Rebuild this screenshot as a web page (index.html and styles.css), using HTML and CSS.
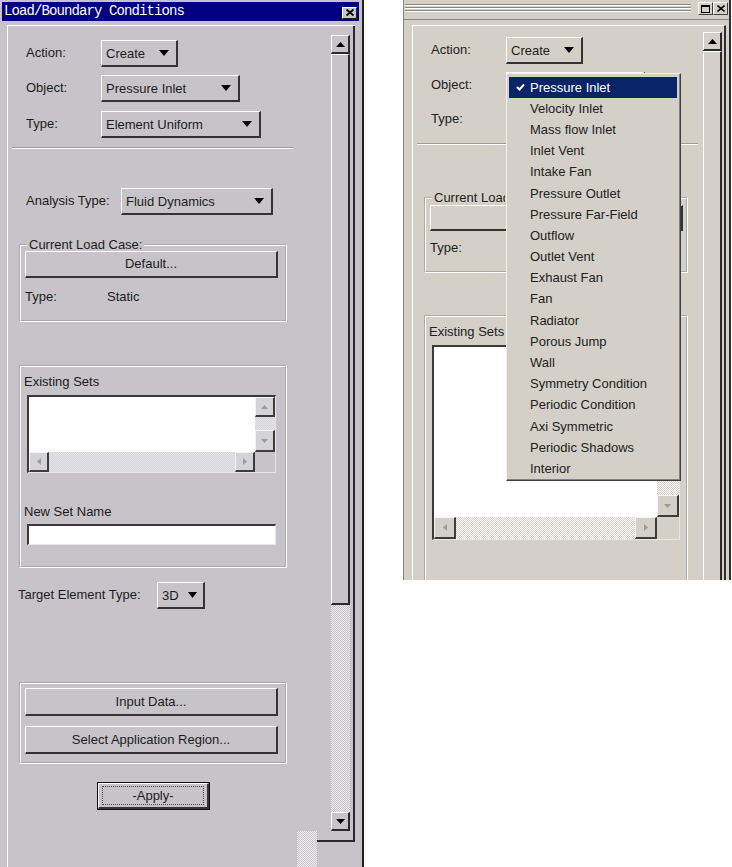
FILE: index.html
```html
<!DOCTYPE html>
<html lang="en">
<head>
<meta charset="utf-8">
<title>Load/Boundary Conditions</title>
<link rel="stylesheet" href="styles.css">
</head>
<body>
<div class="desk">

  <!-- Motif-style form -->
  <section class="lwin">
    <header class="ltitle">
      <span class="ltitle-text">Load/Boundary Conditions</span>
      <span class="tclose"><svg width="8" height="7" viewBox="0 0 8 7"><path d="M0.5 0.5L7.5 6.5M7.5 0.5L0.5 6.5" stroke="#000" stroke-width="1.8"/></svg></span>
    </header>
    <div class="lframe">
      <div class="lmain">
        <div class="form lform">
          <div class="row r-action"><span class="lbl lbl-std">Action:</span><div class="opt opt-create"><span>Create</span><svg width="10" height="6" viewBox="0 0 10 6"><path d="M0 0H10L5 6Z"/></svg></div></div>
          <div class="row r-object"><span class="lbl lbl-std">Object:</span><div class="opt opt-object"><span>Pressure Inlet</span><svg width="10" height="6" viewBox="0 0 10 6"><path d="M0 0H10L5 6Z"/></svg></div></div>
          <div class="row r-type"><span class="lbl lbl-std">Type:</span><div class="opt opt-type"><span>Element Uniform</span><svg width="10" height="6" viewBox="0 0 10 6"><path d="M0 0H10L5 6Z"/></svg></div></div>
          <div class="sep"></div>
          <div class="row r-analysis"><span class="lbl lbl-analysis">Analysis Type:</span><div class="opt opt-analysis"><span>Fluid Dynamics</span><svg width="10" height="6" viewBox="0 0 10 6"><path d="M0 0H10L5 6Z"/></svg></div></div>

          <fieldset class="grp grp-case">
            <legend>Current Load Case:</legend>
            <div class="pbtn">Default...</div>
            <div class="kv"><span class="kv-k">Type:</span><span>Static</span></div>
          </fieldset>

          <fieldset class="grp grp-sets">
            <div class="cap">Existing Sets</div>
            <div class="lst lst-short">
              <div class="lst-body"></div>
              <div class="lst-v">
                <div class="mbtn mbtn-up"><svg width="7" height="4" viewBox="0 0 7 4"><path d="M3.5 0L7 4H0Z"/></svg></div>
                <div class="mtrough"></div>
                <div class="mbtn mbtn-down"><svg width="7" height="4" viewBox="0 0 7 4"><path d="M0 0H7L3.5 4Z"/></svg></div>
              </div>
              <div class="lst-h">
                <div class="mbtn"><svg width="4" height="7" viewBox="0 0 4 7"><path d="M4 0V7L0 3.5Z"/></svg></div>
                <div class="mtrough"></div>
                <div class="mbtn"><svg width="4" height="7" viewBox="0 0 4 7"><path d="M0 0L4 3.5L0 7Z"/></svg></div>
              </div>
              <div class="lst-corner"></div>
            </div>
            <div class="cap cap-name">New Set Name</div>
            <div class="txt"></div>
          </fieldset>

          <div class="row r-target"><span class="lbl lbl-target">Target Element Type:</span><div class="opt opt-3d"><span>3D</span><svg width="9" height="6" viewBox="0 0 9 6"><path d="M0 0H9L4.5 6Z"/></svg></div></div>

          <fieldset class="grp grp-act">
            <div class="pbtn pbtn-tall">Input Data...</div>
            <div class="pbtn pbtn-tall pbtn-next">Select Application Region...</div>
          </fieldset>

          <div class="apply"><div class="apply-in"><span class="focus">-Apply-</span></div></div>
        </div>

        <div class="vsb lvsb">
          <div class="sbtn"><svg width="9" height="5" viewBox="0 0 9 5"><path d="M4.5 0L9 5H0Z"/></svg></div>
          <div class="thumb lthumb"></div>
          <div class="trough"></div>
          <div class="sbtn"><svg width="9" height="5" viewBox="0 0 9 5"><path d="M0 0H9L4.5 5Z"/></svg></div>
        </div>
      </div>
      <div class="lfoot">
        <div class="hstub"></div>
        <div class="corner"></div>
      </div>
    </div>
  </section>

  <!-- Windows-style form with the object menu open -->
  <section class="rwin">
    <header class="rtitle">
      <div class="grip"></div>
      <div class="tbtns">
        <span class="tbtn"><svg width="9" height="8" viewBox="0 0 9 8"><rect x="0.5" y="0.5" width="8" height="7" fill="none" stroke="#000"/><rect x="0" y="0" width="9" height="2"/></svg></span>
        <span class="tbtn"><svg width="8" height="7" viewBox="0 0 8 7"><path d="M0.5 0.5L7.5 6.5M7.5 0.5L0.5 6.5" stroke="#000" stroke-width="1.6"/></svg></span>
      </div>
    </header>
    <div class="rframe">
      <div class="form rform">
        <div class="row r-action"><span class="lbl lbl-std">Action:</span><div class="opt opt-create"><span>Create</span><svg width="10" height="6" viewBox="0 0 10 6"><path d="M0 0H10L5 6Z"/></svg></div></div>
        <!-- the Object and Type option buttons sit under the open menu -->
        <div class="row r-object"><span class="lbl lbl-std">Object:</span><div class="opt opt-object"></div></div>
        <div class="row r-type"><span class="lbl lbl-std">Type:</span><div class="opt opt-type"></div></div>
        <div class="sep"></div>

        <fieldset class="grp grp-case">
          <legend>Current Load Case:</legend>
          <div class="pbtn"></div>
          <div class="kv"><span class="kv-k">Type:</span></div>
        </fieldset>

        <fieldset class="grp grp-sets">
          <div class="cap">Existing Sets</div>
          <div class="lst lst-tall">
            <div class="lst-body"></div>
            <div class="lst-v">
              <div class="mbtn mbtn-up"><svg width="7" height="4" viewBox="0 0 7 4"><path d="M3.5 0L7 4H0Z"/></svg></div>
              <div class="mtrough"></div>
              <div class="mbtn mbtn-down"><svg width="7" height="4" viewBox="0 0 7 4"><path d="M0 0H7L3.5 4Z"/></svg></div>
            </div>
            <div class="lst-h">
              <div class="mbtn"><svg width="4" height="7" viewBox="0 0 4 7"><path d="M4 0V7L0 3.5Z"/></svg></div>
              <div class="mtrough"></div>
              <div class="mbtn"><svg width="4" height="7" viewBox="0 0 4 7"><path d="M0 0L4 3.5L0 7Z"/></svg></div>
            </div>
            <div class="lst-corner"></div>
          </div>
        </fieldset>
      </div>

      <div class="vsb rvsb">
        <div class="sbtn"><svg width="9" height="5" viewBox="0 0 9 5"><path d="M4.5 0L9 5H0Z"/></svg></div>
        <div class="thumb rthumb"></div>
      </div>
    </div>

    <ul class="menu">
      <li class="sel"><svg class="chk" width="9" height="8" viewBox="0 0 9 8"><path d="M1 4L3.5 6.5L8 1.5" fill="none" stroke="#fff" stroke-width="2"/></svg>Pressure Inlet</li>
      <li>Velocity Inlet</li>
      <li>Mass flow Inlet</li>
      <li>Inlet Vent</li>
      <li>Intake Fan</li>
      <li>Pressure Outlet</li>
      <li>Pressure Far-Field</li>
      <li>Outflow</li>
      <li>Outlet Vent</li>
      <li>Exhaust Fan</li>
      <li>Fan</li>
      <li>Radiator</li>
      <li>Porous Jump</li>
      <li>Wall</li>
      <li>Symmetry Condition</li>
      <li>Periodic Condition</li>
      <li>Axi Symmetric</li>
      <li>Periodic Shadows</li>
      <li>Interior</li>
    </ul>
  </section>

</div>
</body>
</html>
```

FILE: styles.css
```css
* { box-sizing: border-box; }

body {
  margin: 0;
  background: #fff;
  font-family: "Liberation Sans", Arial, sans-serif;
  font-size: 13px;
  color: #1c1c1c;
}

.desk {
  display: flex;
  align-items: flex-start;
}

/* ---------- left window ---------- */
.lwin {
  width: 364px;
  height: 867px;
  background: #c6c4c9;
  border-right: 2px solid #222;
  padding-top: 2px;
  display: flex;
  flex-direction: column;
}

.ltitle {
  height: 19px;
  margin: 0 3px 0 2px;
  background: #000080;
  color: #fff;
  display: flex;
  align-items: center;
  justify-content: space-between;
  padding: 0 2px;
}

.ltitle-text {
  font-family: "Liberation Mono", "Courier New", monospace;
  font-size: 14px;
  letter-spacing: -0.9px;
  line-height: 19px;
}

.tclose {
  width: 15px;
  height: 12px;
  margin-top: 2px;
  background: #c6c4c9;
  border-top: 1px solid #fff;
  border-left: 1px solid #fff;
  border-right: 1px solid #222;
  border-bottom: 1px solid #222;
  display: flex;
  align-items: center;
  justify-content: center;
}

.lframe {
  margin: 4px 0 0 7px;
  width: 348px;
  flex: 1;
  border-top: 1px solid #fff;
  border-left: 1px solid #fff;
  display: flex;
  flex-direction: column;
}

.lmain {
  height: 805px;
  display: flex;
  border-right: 2px solid #2a2a2a;
}

.lfoot {
  flex: 1;
  display: flex;
  justify-content: flex-end;
  align-items: flex-start;
}

.hstub {
  width: 20px;
  height: 36px;
  background: repeating-conic-gradient(#efeef0 0 25%, #c6c4c9 0 50%) 0 0 / 2px 2px;
}

.corner {
  width: 38px;
  height: 11px;
  border-right: 2px solid #2a2a2a;
  border-bottom: 2px solid #2a2a2a;
}

/* ---------- shared form pieces ---------- */
.form {
  flex: 1;
  min-width: 0;
  display: flex;
  flex-direction: column;
  align-items: flex-start;
}

.row {
  display: flex;
  align-items: center;
}

.lbl {
  padding-bottom: 2px;
  white-space: nowrap;
}

.lbl-std { margin-left: 18px; width: 75px; }
.lbl-analysis { margin-left: 18px; width: 95px; }
.lbl-target { margin-left: 10px; width: 139px; }

.opt {
  height: 27px;
  display: flex;
  align-items: center;
  justify-content: space-between;
  padding: 0 7px 0 4px;
  border-top: 1px solid #fff;
  border-left: 1px solid #fff;
  border-right: 2px solid #333;
  border-bottom: 2px solid #333;
  white-space: nowrap;
}

.opt svg { fill: #000; flex: none; }

.opt-create { width: 77px; }
.opt-object { width: 139px; }
.opt-type { width: 160px; }
.opt-analysis { width: 152px; }
.opt-3d { width: 48px; padding-right: 6px; }

.sep {
  margin-left: 4px;
  width: 281px;
  height: 2px;
  border-top: 1px solid #9c9a9e;
  border-bottom: 1px solid #fff;
}

.grp {
  margin: 0 0 0 11px;
  padding: 0 0 0 4px;
  border: 2px groove #fff;
  min-width: 0;
  display: block;
}

.grp legend {
  padding: 0 2px;
  margin-left: 2px;
  line-height: 12px;
}

.pbtn {
  width: 253px;
  height: 27px;
  display: flex;
  align-items: center;
  justify-content: center;
  border-top: 1px solid #fff;
  border-left: 1px solid #fff;
  border-right: 2px solid #333;
  border-bottom: 2px solid #333;
  padding-bottom: 1px;
}

.pbtn-tall { height: 28px; }
.pbtn-next { margin-top: 10px; }

.kv {
  display: flex;
  line-height: 16px;
  height: 16px;
  margin-top: 11px;
}

.kv-k { width: 82px; }

.cap { line-height: 16px; }
.cap-name { margin-top: 31px; }

.lst {
  margin-left: 3px;
  display: grid;
  background: #fff;
  border-top: 2px solid #3a3a3a;
  border-left: 2px solid #3a3a3a;
  border-right: 1px solid #e6e6e6;
  border-bottom: 1px solid #e6e6e6;
}

.lst-short {
  width: 249px;
  height: 78px;
  margin-top: 5px;
  grid-template-columns: 1fr 20px;
  grid-template-rows: 1fr 20px;
}

.lst-tall {
  width: 248px;
  height: 195px;
  margin-top: 5px;
  grid-template-columns: 1fr 22px;
  grid-template-rows: 1fr 22px;
}

.lst-body { background: #fff; }

.lst-v {
  display: flex;
  flex-direction: column;
}

.lst-h {
  display: flex;
}

.lst-corner { background: #c6c4c9; }

.mbtn {
  flex: none;
  width: 20px;
  height: 20px;
  display: flex;
  align-items: center;
  justify-content: center;
  background: #d4d4d6;
  border-top: 1px solid #f4f4f4;
  border-left: 1px solid #f4f4f4;
  border-right: 2px solid #3c3c3c;
  border-bottom: 2px solid #3c3c3c;
}

.mbtn svg { fill: #9c9c9c; }

.lst-short .mbtn-down { height: 22px; }

.mtrough {
  flex: 1;
  background: repeating-conic-gradient(#e4e4e6 0 25%, #d6d6d8 0 50%) 0 0 / 2px 2px;
}

.txt {
  margin-left: 3px;
  margin-top: 4px;
  width: 249px;
  height: 21px;
  background: #fff;
  border-top: 2px solid #3a3a3a;
  border-left: 2px solid #3a3a3a;
  border-right: 1px solid #e6e6e6;
  border-bottom: 1px solid #e6e6e6;
}

.apply {
  margin: 18px 0 0 89px;
  width: 113px;
  height: 28px;
  border: 1px solid #111;
}

.apply-in {
  height: 100%;
  padding: 2px 3px 2px 3px;
  border-top: 1px solid #fff;
  border-left: 1px solid #fff;
  border-right: 2px solid #333;
  border-bottom: 2px solid #333;
}

.focus {
  display: flex;
  height: 100%;
  align-items: center;
  justify-content: center;
  border: 1px dotted #444;
}

/* ---------- left form spacing ---------- */
.lform .r-action { margin-top: 14px; }
.lform .r-object { margin-top: 8px; }
.lform .r-type { margin-top: 9px; }
.lform .sep { margin-top: 9px; }
.lform .r-analysis { margin-top: 39px; }
.lform .grp-case { margin-top: 24px; padding-bottom: 15px; }
.lform .grp-sets { margin-top: 43px; padding: 7px 0 21px 3px; }
.lform .r-target { margin-top: 14px; }
.lform .grp-act { margin-top: 73px; padding-top: 4px; padding-bottom: 8px; }
.lform .grp { width: 268px; }

/* ---------- scrollbars ---------- */
.vsb {
  flex: none;
  width: 19px;
  display: flex;
  flex-direction: column;
}

.lvsb { margin: 9px 3px 0 0; }

.sbtn {
  height: 19px;
  display: flex;
  align-items: center;
  justify-content: center;
  border-top: 1px solid #fff;
  border-left: 1px solid #fff;
  border-right: 2px solid #2a2a2a;
  border-bottom: 2px solid #2a2a2a;
}

.sbtn svg { fill: #000; }

.thumb {
  border-top: 1px solid #fff;
  border-left: 1px solid #fff;
  border-right: 2px solid #2a2a2a;
  border-bottom: 2px solid #2a2a2a;
}

.lthumb { height: 551px; }

.trough {
  flex: 1;
  background: repeating-conic-gradient(#ebeaec 0 25%, #c6c4c9 0 50%) 0 0 / 2px 2px;
}

/* ---------- right window ---------- */
.rwin {
  position: relative;
  margin-left: 39px;
  width: 328px;
  height: 580px;
  overflow: hidden;
  background: #d4d0c8;
  border-left: 1px solid #87857f;
  border-right: 2px solid #2f2f2f;
  display: flex;
  flex-direction: column;
  color: #222;
}

.rtitle {
  height: 20px;
  flex: none;
  display: flex;
  align-items: flex-start;
  border-bottom: 1px solid #8a8780;
}

.grip {
  flex: 1;
  height: 9px;
  margin: 4px 7px 0 1px;
  background: linear-gradient(#8a8780 0 1px, #fff 1px 2px, #d4d0c8 2px 3px, #8a8780 3px 4px, #fff 4px 5px, #d4d0c8 5px 6px, #8a8780 6px 7px, #fff 7px 8px, #d4d0c8 8px);
}

.tbtns {
  display: flex;
  margin: 2px 1px 0 0;
}

.tbtn {
  width: 15px;
  height: 13px;
  display: flex;
  align-items: center;
  justify-content: center;
  background: #d4d0c8;
  border-top: 1px solid #fff;
  border-left: 1px solid #fff;
  border-right: 1px solid #404040;
  border-bottom: 1px solid #404040;
}

.rframe {
  flex: 1;
  margin: 5px 0 0 8px;
  width: 314px;
  display: flex;
  border-top: 1px solid #fff;
  border-left: 1px solid #fff;
  border-right: 2px solid #2f2f2f;
}

.rform .r-action { margin-top: 11px; }
.rform .r-object { margin-top: 8px; }
.rform .r-type { margin-top: 7px; }
.rform .sep { margin-top: 10px; }
.rform .grp { width: 264px; }
.rform .grp-case { margin-top: 47px; padding-bottom: 15px; }
.rform .grp-case legend {
  max-width: 73px;
  overflow: hidden;
  white-space: nowrap;
}
.rform .grp-case .pbtn { margin-top: 1px; height: 26px; }
.rform .kv { margin-top: 9px; }
.rform .grp-sets { margin-top: 42px; padding: 7px 0 40px 3px; }
.rform .lst-corner { background: #d4d0c8; }
.rform .mbtn { width: 22px; height: 22px; background: #d4d0c8; }
.rform .mtrough { background: repeating-conic-gradient(#fff 0 25%, #d4d0c8 0 50%) 0 0 / 2px 2px; }

.rvsb { margin: 6px 2px 0 0; }
.rthumb { height: 600px; }

/* open option menu */
.menu {
  position: absolute;
  left: 102px;
  top: 73px;
  width: 175px;
  margin: 0;
  padding: 3px 2px 0 2px;
  list-style: none;
  background: #d4d0c8;
  border-top: 1px solid #f2f0ec;
  border-left: 1px solid #f2f0ec;
  border-right: 1px solid #404040;
  border-bottom: 1px solid #404040;
  box-shadow: inset -1px -1px 0 #808080;
}

.menu li {
  height: 21.2px;
  display: flex;
  align-items: center;
  padding: 0 0 1px 21px;
  position: relative;
  color: #222;
  white-space: nowrap;
}

.menu li.sel {
  background: #0a246a;
  color: #fff;
  margin-right: 1px;
}

.chk {
  position: absolute;
  left: 7px;
  top: 6px;
}
```
